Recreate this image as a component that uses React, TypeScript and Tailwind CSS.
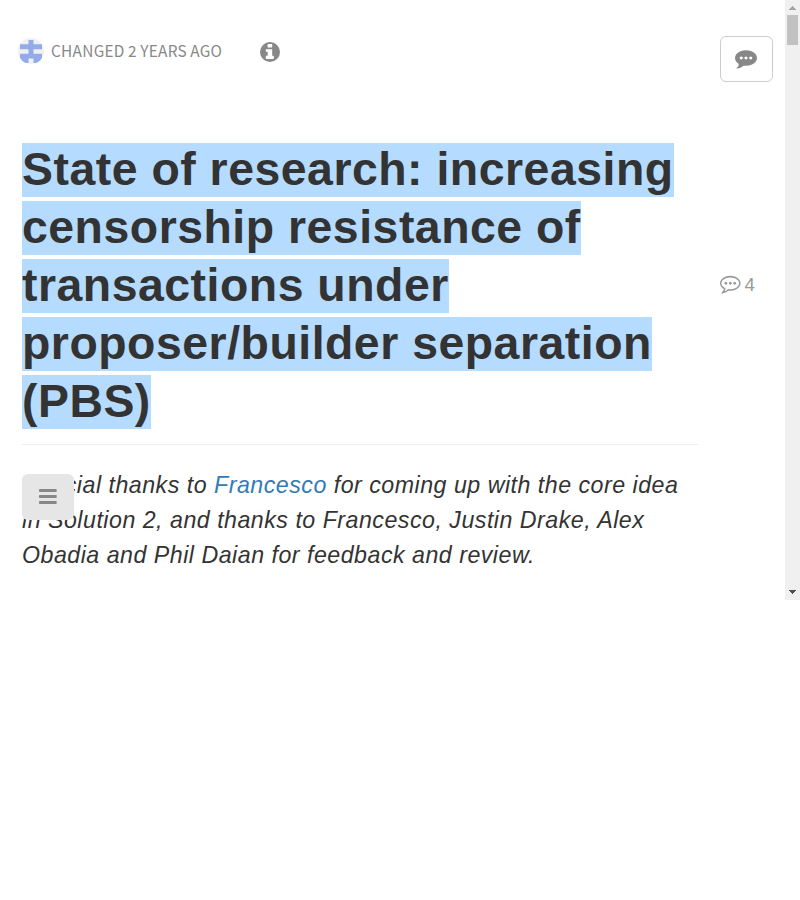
import React from "react";

const dots =
  "M640 896q0 53-37.5 90.5t-90.5 37.5-90.5-37.5-37.5-90.5 37.5-90.5 90.5-37.5 90.5 37.5 37.5 90.5zm384 0q0 53-37.5 90.5t-90.5 37.5-90.5-37.5-37.5-90.5 37.5-90.5 90.5-37.5 90.5 37.5 37.5 90.5zm384 0q0 53-37.5 90.5t-90.5 37.5-90.5-37.5-37.5-90.5 37.5-90.5 90.5-37.5 90.5 37.5 37.5 90.5z";

function Avatar() {
  return (
    <svg className="size-[26px] rounded-full" viewBox="0 0 26 26">
      <rect width="26" height="26" fill="#f0f0f0" />
      <path
        fill="#93abe8"
        d="M10.5 2h5v4.3H24v5h-8.500v4.400H24v9.300h-8.500v-4.500h-5v4.500H2v-9.300h8.500v-4.400H2v-5h8.500z"
      />
    </svg>
  );
}

function InfoIcon() {
  return (
    <svg className="mt-0.5 size-5" viewBox="0 0 20 20">
      <circle cx="10" cy="10" r="10" fill="#888" />
      <rect x="7.600" y="1.900" width="4.600" height="3.500" rx="0.400" fill="#fff" />
      <path
        fill="#fff"
        d="M6.200 7.200h5.600q.4 0 .4.4v6.200h1.200q.4 0 .4.4v2.400q0 .4-.4.4H6.200q-.4 0-.4-.4v-2.400q0-.4.4-.4h1.500V9.700H6.200q-.4 0-.4-.4V7.600q0-.4.4-.4z"
      />
    </svg>
  );
}

function CommentIcon() {
  return (
    <svg className="mr-0.5 mb-0.5 size-[22px] fill-[#888]" viewBox="0 0 1792 1792">
      <path d="M1792 896q0 174-120 321.5t-326 233-450 85.5q-110 0-211-18-173 173-435 229-52 10-86 13-12 1-22-6t-13-18q-4-15 20-37 5-5 23.5-21.5t25.5-23.5 23.5-25.5 24-31.5 20.5-37 20-48 14.5-57.5 12.5-72.5q-146-90-229.5-216.5t-83.5-269.5q0-174 120-321.5t326-233 450-85.5 450 85.5 326 233 120 321.5z" />
      <path d={dots} className="fill-white" />
    </svg>
  );
}

function CommentOutlineIcon() {
  return (
    <svg className="mt-[0.4px] size-[20.6px] fill-[#999]" viewBox="0 0 1792 1792">
      <path d={dots} />
      <path d="M896 384q-204 0-381.5 69.5t-282 187.5-104.5 255q0 112 71.5 213.5t201.5 175.5l87 50-27 96q-24 91-70 172 152-63 275-171l43-38 57 6q69 8 130 8 204 0 381.5-69.5t282-187.5 104.5-255-104.5-255-282-187.5-381.5-69.5zm896 512q0 174-120 321.5t-326 233-450 85.5q-70 0-145-8-198 175-460 234-49 14-114 22h-5q-15 0-27-10.5t-16-27.5v-1q-3-4-.5-12t2-10 4.5-9.5l6-9 7-8.5 8-9q7-8 31-34.5t34.5-38 31-39.5 32.5-51 27-59 26-76q-157-89-247.5-220t-90.5-281q0-174 120-321.500t326-233 450-85.500 450 85.500 326 233 120 321.500z" />
    </svg>
  );
}

function Scrollbar() {
  return (
    <div className="flex w-[15px] shrink-0 flex-col items-center bg-[#f0f0f0]">
      <svg className="h-[15px] w-[15px] shrink-0" viewBox="0 0 15 15" shapeRendering="crispEdges">
        <path d="M3.500 10h8L7.500 6z" fill="#a3a3a3" />
      </svg>
      <div className="h-[30px] w-[11px] bg-[#c1c1c1]" />
      <svg className="mt-auto h-[15px] w-[15px] shrink-0" viewBox="0 0 15 15" shapeRendering="crispEdges">
        <path d="M3.500 5h8L7.500 9z" fill="#505050" />
      </svg>
    </div>
  );
}

export default function App() {
  return (
    <div className="h-[900px] w-[800px] bg-white font-['Liberation_Sans',sans-serif] text-[#333]">
      <div className="flex h-[600px] overflow-hidden">
        <main className="w-[698px] shrink-0">
          <header className="flex h-[102px] items-center pl-[18px]">
            <Avatar />
            <span className="mb-0.5 ml-[7px] w-[209px] whitespace-nowrap font-['Noto_Sans_CJK_SC',sans-serif] text-[15.4px] leading-6 tracking-[0.28px] [word-spacing:-0.4px] text-[#888]">
              CHANGED 2 YEARS AGO
            </span>
            <InfoIcon />
          </header>
          <article className="relative ml-[22px] pt-[38px]">
            <h1 className="border-b border-[#eee] pb-[14px] text-[46.4px] leading-[58px] font-bold tracking-[0.51px]">
              {[
                "State of research: increasing",
                "censorship resistance of",
                "transactions under",
                "proposer/builder separation",
                "(PBS)",
              ].map((line) => (
                <span key={line} className="block whitespace-nowrap">
                  <span className="bg-[#b5dbff] pb-0.5">{line}</span>
                </span>
              ))}
            </h1>
            <p className="mt-[23px] text-[23.2px] leading-[35px] tracking-[0.5px] whitespace-nowrap italic">
              Special thanks to <a className="text-[#337ab7]">Francesco</a> for coming up with the core idea
              <br />
              in Solution 2, and thanks to Francesco, Justin Drake, Alex
              <br />
              Obadia and Phil Daian for feedback and review.
            </p>
            <button className="absolute top-[372px] left-0 flex h-[46px] w-[52px] items-center justify-center rounded-[6px] bg-[#e6e6e6]">
              <svg className="h-[16px] w-[18px] fill-[#888]" viewBox="0 0 18 16">
                <rect y="0" width="17.700" height="3" rx="0.700" />
                <rect y="6" width="17.700" height="3" rx="0.700" />
                <rect y="12" width="17.700" height="3" rx="0.700" />
              </svg>
            </button>
          </article>
        </main>
        <aside className="flex w-[87px] shrink-0 flex-col items-start pt-9 pl-[22px]">
          <button className="flex h-[46px] w-[53px] items-center justify-center rounded-[6px] border border-[#ccc] bg-white">
            <CommentIcon />
          </button>
          <div className="mt-[191px] flex items-start text-[#999]">
            <CommentOutlineIcon />
            <span className="ml-1 text-[18.7px] leading-[23px]">4</span>
          </div>
        </aside>
        <Scrollbar />
      </div>
    </div>
  );
}
